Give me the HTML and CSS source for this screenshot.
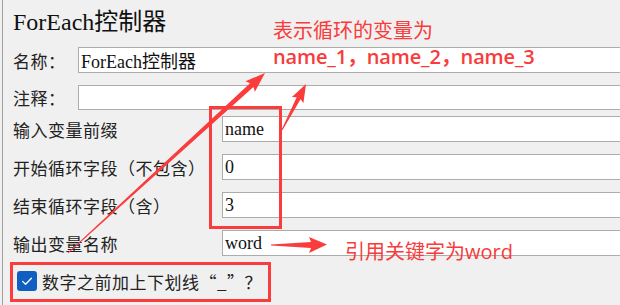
FILE: index.html
```html
<!DOCTYPE html>
<html>
<head>
<meta charset="utf-8">
<link rel="stylesheet" href="styles.css">
</head>
<body>
<div class="page">
  <div class="frame">
    <div class="title">ForEach控制器</div>
    <div class="row top">
      <div class="label narrow">名称：</div>
      <input class="field" type="text" value="ForEach控制器">
    </div>
    <div class="row top second">
      <div class="label narrow">注释：</div>
      <input class="field" type="text" value="">
    </div>
    <div class="panel">
      <div class="row">
        <div class="label wide">输入变量前缀</div>
        <input class="field" type="text" value="name">
      </div>
      <div class="row">
        <div class="label wide">开始循环字段（不包含）</div>
        <input class="field" type="text" value="0">
      </div>
      <div class="row">
        <div class="label wide">结束循环字段（含）</div>
        <input class="field" type="text" value="3">
      </div>
      <div class="row">
        <div class="label wide">输出变量名称</div>
        <input class="field" type="text" value="word">
      </div>
      <div class="check-row">
        <svg class="checkbox" width="20" height="20" viewBox="0 0 20 20">
          <rect x="0" y="0" width="20" height="20" rx="3" fill="#0f5fc2"/>
          <path d="M5.6 10.4 L8.6 13.3 L14.4 7.2" fill="none" stroke="#fff" stroke-width="1.3" stroke-linecap="round" stroke-linejoin="round"/>
        </svg>
        <span class="check-label">数字之前加上下划线“_”？</span>
      </div>
    </div>
  </div>

  <div class="note note-top">表示循环的变量为</div>
  <div class="note note-vars">name_1，name_2，name_3</div>
  <div class="note note-word">引用关键字为word</div>
  <div class="mark mark-fields"></div>
  <div class="mark mark-check"></div>
  <svg class="arrows" width="620" height="305" viewBox="0 0 620 305">
    <polygon fill="#fa3c3c" points="68.34,253.37 253.40,86.99 254.96,91.66 265,73 245.52,81.32 250.02,83.29 67.66,252.63"/>
    <polygon fill="#fa3c3c" points="282.44,130.23 300.55,99.21 303.43,102.97 306,84 291.91,96.95 296.65,97.17 281.56,129.77"/>
    <polygon fill="#fa3c3c" points="271,244.6 311,242 309,237 327,244.5 309,253 311,248 271,245.4"/>
  </svg>
</div>
</body>
</html>
```

FILE: styles.css
```css
html, body {
  margin: 0;
  padding: 0;
  background: #f0f0f0;
  overflow: hidden;
}

.page {
  position: relative;
  width: 620px;
  height: 305px;
  overflow: hidden;
}

.frame {
  margin-left: 2px;
  border-left: 1px solid #a0a0a0;
  height: 305px;
  padding-left: 10px;
  box-sizing: border-box;
  font-family: "Liberation Serif", "Noto Sans CJK SC", serif;
  color: #1a1a1a;
}

.title {
  height: 47px;
  box-sizing: border-box;
  padding-top: 7px;
  font-size: 24px;
  line-height: 30px;
  color: #111;
}

.row {
  display: flex;
  align-items: center;
  height: 26px;
  margin-bottom: 12px;
}

.row.top {
  margin-bottom: 0;
}

.row.top.second {
  margin-top: 12px;
  height: 25px;
}

.panel {
  margin-top: 6px;
}

.label {
  flex: none;
  font-family: "Noto Sans CJK SC", sans-serif;
  font-size: 17px;
  letter-spacing: 0.5px;
  color: #222;
  white-space: nowrap;
}

.label.narrow {
  width: 65px;
}

.label.wide {
  width: 209px;
}

.field {
  flex: 1;
  height: 100%;
  margin: 0 -30px 0 0;
  box-sizing: border-box;
  border: 1px solid #acacac;
  background: #fff;
  padding: 0 2px;
  font-family: "Liberation Serif", "Noto Sans CJK SC", serif;
  font-size: 18px;
  color: #111;
  outline: none;
}

.check-row {
  display: flex;
  align-items: center;
  gap: 5px;
  margin-top: 15px;
  padding-left: 4px;
  height: 20px;
}

.checkbox {
  flex: none;
}

.check-label {
  font-family: "Noto Sans CJK SC", sans-serif;
  font-size: 17px;
  letter-spacing: 0.5px;
  color: #222;
  white-space: nowrap;
}

.note {
  position: absolute;
  font-family: "Open Sans", "Noto Sans CJK SC", sans-serif;
  font-size: 20px;
  line-height: 24px;
  color: #f83b3b;
  white-space: nowrap;
}

.note-top {
  left: 273px;
  top: 19px;
}

.note-vars {
  left: 273px;
  top: 45px;
  font-weight: 600;
  letter-spacing: -0.15px;
}

.note-word {
  left: 345px;
  top: 240px;
}

.mark {
  position: absolute;
  border: 3px solid #fa3c3c;
  box-sizing: border-box;
}

.mark-fields {
  left: 209px;
  top: 106px;
  width: 73px;
  height: 123px;
}

.mark-check {
  left: 10px;
  top: 262px;
  width: 261px;
  height: 40px;
}

.arrows {
  position: absolute;
  left: 0;
  top: 0;
}
```
